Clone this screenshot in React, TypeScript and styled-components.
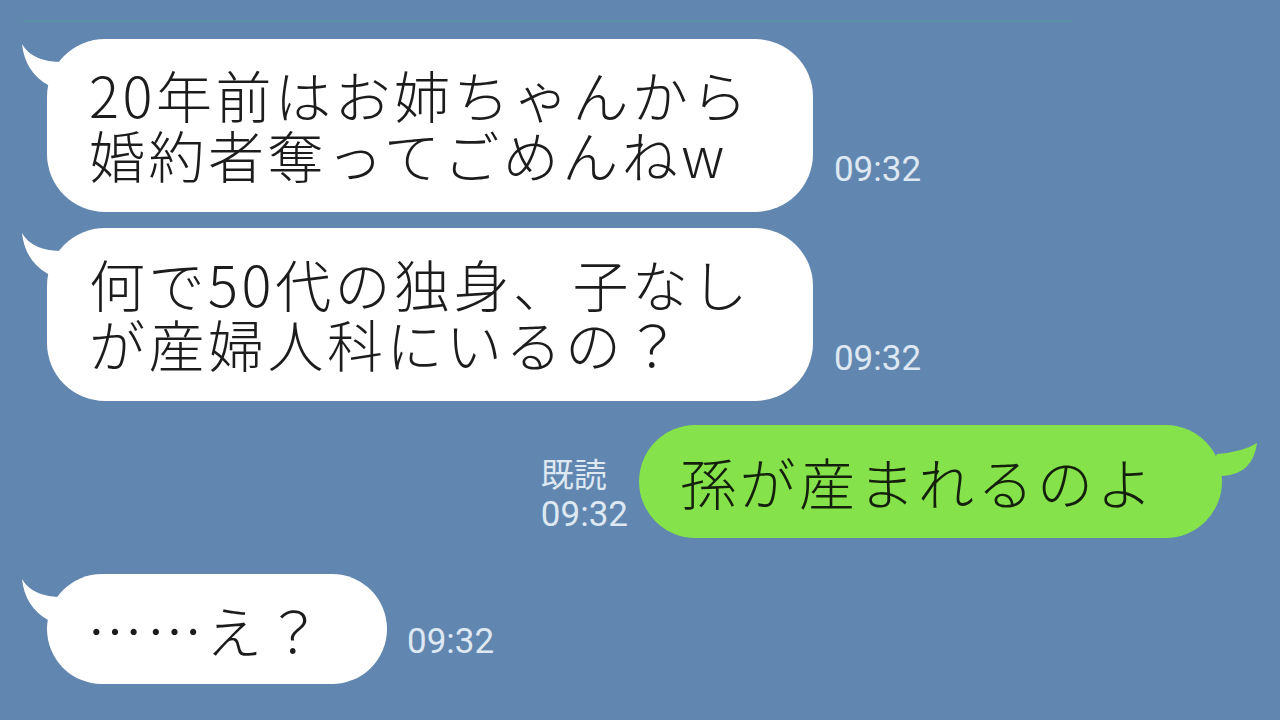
import styled, { createGlobalStyle } from "styled-components";

const GlobalStyle = createGlobalStyle`
  html, body {
    margin: 0;
    padding: 0;
  }
  body {
    width: 1280px;
    height: 720px;
    overflow: hidden;
    background: #6186b0;
    font-family: "Noto Sans CJK JP", "Noto Sans", sans-serif;
  }
`;

const Screen = styled.div`
  width: 1280px;
  height: 720px;
  box-sizing: border-box;
  padding-top: 20px;
  display: flex;
  flex-direction: column;
`;

const Divider = styled.div`
  margin-left: 22px;
  width: 1049px;
  height: 2px;
  background: #5b8fa7;
`;

const Row = styled.div<{ $mine?: boolean; $top: number; $gap: number }>`
  display: flex;
  align-items: flex-end;
  justify-content: ${(p) => (p.$mine ? "flex-end" : "flex-start")};
  gap: ${(p) => p.$gap}px;
  margin-top: ${(p) => p.$top}px;
  padding: ${(p) => (p.$mine ? "0 58px 0 0" : "0 0 0 47px")};
`;

const Bubble = styled.div<{ $mine?: boolean; $pad: string }>`
  position: relative;
  background: ${(p) => (p.$mine ? "#85e24b" : "#ffffff")};
  color: ${(p) => (p.$mine ? "#14200c" : "#1c1c1c")};
  border-radius: 58px;
  padding: ${(p) => p.$pad};
  font-size: 56px;
  line-height: 60px;
  letter-spacing: 3.5px;
  font-weight: 300;
  white-space: pre-line;
`;

const Tail = styled.svg<{ $mine?: boolean }>`
  position: absolute;
  width: 50px;
  height: 55px;
  top: ${(p) => (p.$mine ? "15px" : "2px")};
  ${(p) => (p.$mine ? "right: -36px; transform: scaleX(-1);" : "left: -26px;")}
`;

const Meta = styled.div<{ $drop: number }>`
  display: flex;
  flex-direction: column;
  margin-bottom: ${(p) => p.$drop}px;
  color: #dde8f3;
`;

const Read = styled.span`
  font-family: "Noto Sans CJK JP", sans-serif;
  font-size: 33px;
  line-height: 41px;
`;

const Time = styled.span`
  font-family: Roboto, "Noto Sans", sans-serif;
  font-size: 35px;
  line-height: 41px;
`;

function BubbleTail({ mine }: { mine?: boolean }) {
  const fill = mine ? "#85e24b" : "#ffffff";
  const d = mine
    ? "M1 3 Q15 12 41 14 L50 30 L35 36 Q5 34 1 3 Z"
    : "M1 3 Q11 21 42 21 L49 45 L27 44 Q4 31 1 3 Z";
  return (
    <Tail $mine={mine} viewBox="0 0 50 55">
      <path d={d} fill={fill} />
    </Tail>
  );
}

export default function App() {
  return (
    <>
      <GlobalStyle />
      <Screen>
        <Divider />

        <Row $top={17} $gap={21}>
          <Bubble $pad="25px 62px 28px 42px">
            <BubbleTail />
            {"20年前はお姉ちゃんから\n婚約者奪ってごめんねw"}
          </Bubble>
          <Meta $drop={22}>
            <Time>09:32</Time>
          </Meta>
        </Row>

        <Row $top={16} $gap={21}>
          <Bubble $pad="25px 62px 28px 42px">
            <BubbleTail />
            {"何で50代の独身、子なし\nが産婦人科にいるの？"}
          </Bubble>
          <Meta $drop={22}>
            <Time>09:32</Time>
          </Meta>
        </Row>

        <Row $mine $top={24} $gap={11}>
          <Meta $drop={3}>
            <Read>既読</Read>
            <Time>09:32</Time>
          </Meta>
          <Bubble $mine $pad="26px 66px 27px 41px">
            <BubbleTail mine />
            孫が産まれるのよ
          </Bubble>
        </Row>

        <Row $top={36} $gap={20}>
          <Bubble $pad="25px 62px 25px 40px">
            <BubbleTail />
            ……え？
          </Bubble>
          <Meta $drop={22}>
            <Time>09:32</Time>
          </Meta>
        </Row>
      </Screen>
    </>
  );
}
